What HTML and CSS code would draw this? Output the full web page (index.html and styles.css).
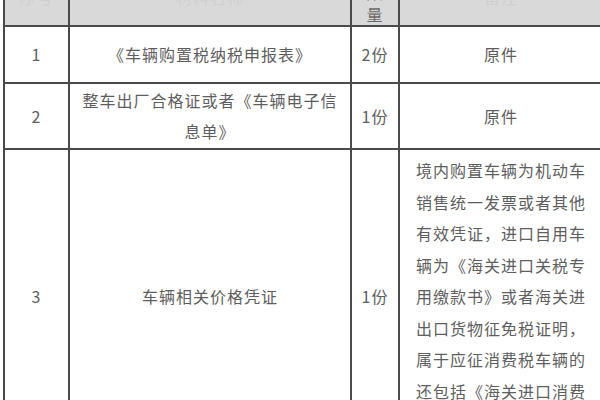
FILE: index.html
```html
<!DOCTYPE html>
<html lang="zh-CN">
<head>
<meta charset="utf-8">
<title>车辆购置税申报材料</title>
<link rel="stylesheet" href="styles.css">
</head>
<body>
<table class="docs">
  <colgroup>
    <col class="c-no">
    <col class="c-name">
    <col class="c-qty">
    <col class="c-note">
  </colgroup>
  <thead>
    <tr class="head-row">
      <th>序号</th>
      <th>材料名称</th>
      <th class="qty-head">数量</th>
      <th>备注</th>
    </tr>
  </thead>
  <tbody>
    <tr class="row-1">
      <td>1</td>
      <td>《车辆购置税纳税申报表》</td>
      <td>2份</td>
      <td>原件</td>
    </tr>
    <tr class="row-2">
      <td>2</td>
      <td>整车出厂合格证或者《车辆电子信息单》</td>
      <td>1份</td>
      <td>原件</td>
    </tr>
    <tr class="row-3">
      <td>3</td>
      <td>车辆相关价格凭证</td>
      <td>1份</td>
      <td class="note">境内购置车辆为机动车销售统一发票或者其他有效凭证，进口自用车辆为《海关进口关税专用缴款书》或者海关进出口货物征免税证明，属于应征消费税车辆的还包括《海关进口消费税专用缴款书》</td>
    </tr>
  </tbody>
</table>
</body>
</html>
```

FILE: styles.css
```css
html, body {
  margin: 0;
  padding: 0;
  overflow: hidden;
  background: #ffffff;
}

body {
  font-family: "Noto Sans CJK SC", "Noto Sans", sans-serif;
  color: #5e5e5e;
  font-size: 16px;
}

.docs {
  border-collapse: collapse;
  table-layout: fixed;
  margin: -21px 0 0 3px;
  width: 599px;
}

.c-no { width: 65px; }
.c-name { width: 282px; }
.c-qty { width: 48px; }
.c-note { width: 204px; }

.docs th,
.docs td {
  border: 2px solid #4a4a4a;
  padding: 6px 8px;
  text-align: center;
  vertical-align: middle;
  line-height: 31px;
  letter-spacing: 1px;
  font-weight: normal;
}

.docs th {
  background: #d9d9d9;
  color: #d0d0d0;
  line-height: 22px;
  padding: 0 8px 12px;
}

.docs th.qty-head {
  color: #6a6a6a;
  padding: 0 8px;
}

.row-1 td {
  height: 43px;
}

.row-2 td {
  padding: 1px 8px;
}

.docs td.note {
  padding: 5px 8px;
  line-height: 31.5px;
}
```
